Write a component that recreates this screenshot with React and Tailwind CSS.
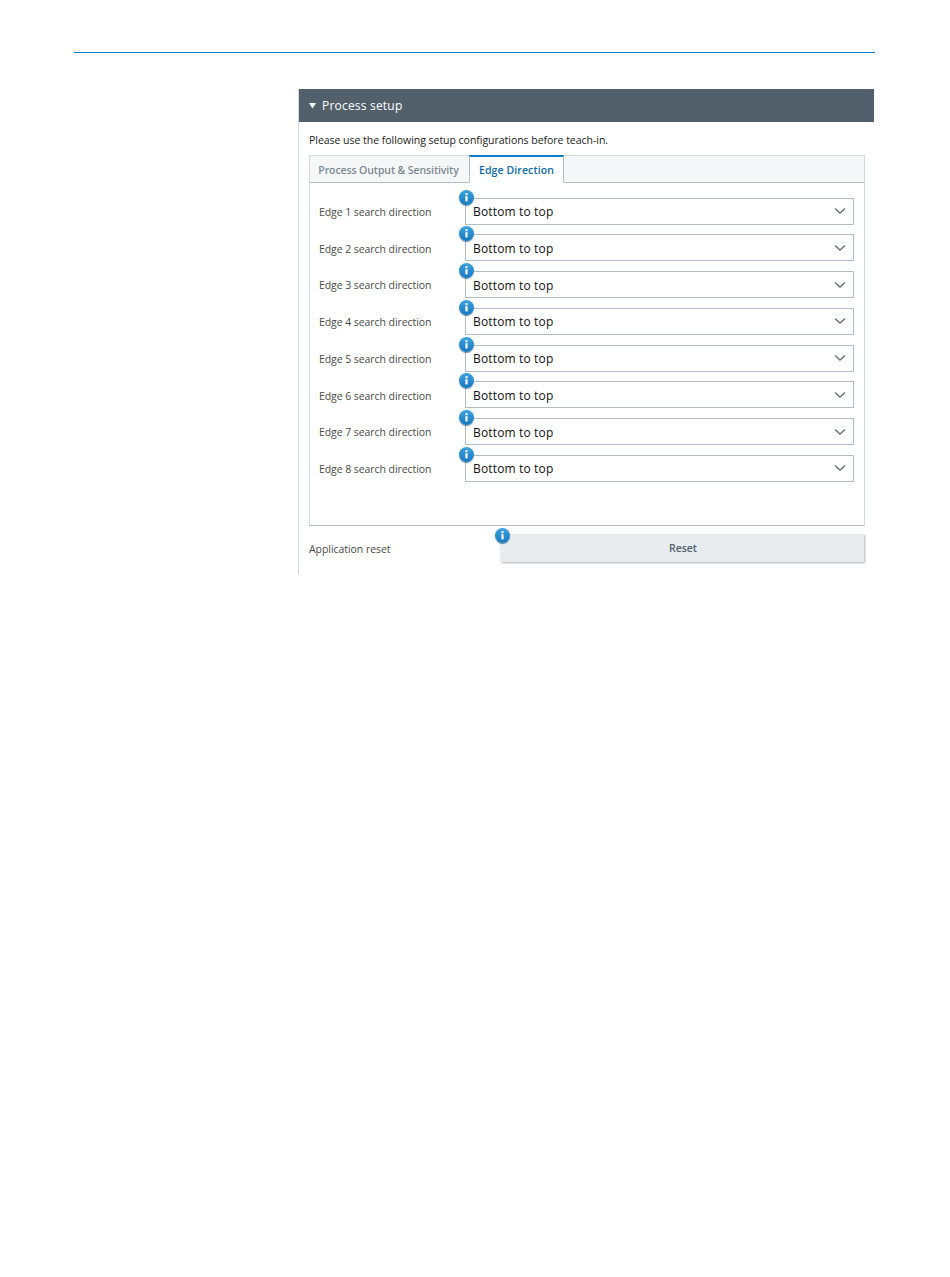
import React from "react";

const FONT = "font-['Open_Sans','Noto_Sans',sans-serif]";

const InfoBadge = ({ className }) => (
  <span className={`absolute flex h-[15px] w-[15px] items-center justify-center rounded-full bg-gradient-to-b from-[#3ba4e4] to-[#1677bc] shadow-[0_1px_1px_rgba(0,60,110,0.6)] ${className}`}>
    <svg width="15" height="15" viewBox="0 0 15 15">
      <rect x="6.4" y="3.2" width="2.2" height="2" fill="#fff" />
      <rect x="6.4" y="6.2" width="2.2" height="5.2" fill="#fff" />
    </svg>
  </span>
);

const Chevron = () => (
  <svg width="12" height="8" viewBox="0 0 12 8" fill="none">
    <path d="M1 1.5 L6 6 L11 1.5" stroke="#66747f" strokeWidth="1.5" />
  </svg>
);

const EdgeRow = ({ n }) => (
  <div className="flex h-[27px] items-center">
    <span className="w-[155px] pl-[9px] pt-[2px] text-[10.5px] leading-none tracking-[-0.07px] text-[#4a4a4a]">
      Edge {n} search direction
    </span>
    <div className="relative flex h-[27px] w-[389px] items-center justify-between border border-[#b3bdc5] pl-[7px] pr-[7px]">
      <InfoBadge className="left-[-7px] top-[-9px]" />
      <span className="pt-[2px] text-[12px] leading-none tracking-[0.15px] text-[#111]">Bottom to top</span>
      <Chevron />
    </div>
  </div>
);

export default function App() {
  const edges = [1, 2, 3, 4, 5, 6, 7, 8];

  return (
    <div className={`h-[1277px] w-[950px] bg-white pt-[52px] ${FONT}`}>
      {/* top rule */}
      <div className="ml-[74px] h-px w-[801px] bg-[#0a7fc4]" />

      <div className="ml-[298px] mt-[36px] h-[485px] w-[576px] border-l border-[#d3d8dc]">
        {/* header */}
        <div className="flex h-[33px] items-center gap-[6px] bg-[#52606c] pl-[10px] text-white">
          <svg width="7" height="7" viewBox="0 0 7 7">
            <path d="M0 1 L7 1 L3.5 6.5 Z" fill="#fff" />
          </svg>
          <span className="text-[12px] font-medium leading-none tracking-[0.2px]">Process setup</span>
        </div>

        <p className="mt-[11px] pl-[10px] text-[10.5px] leading-[14px] tracking-[-0.03px] text-[#222]">
          Please use the following setup configurations before teach-in.
        </p>

        {/* tabs panel */}
        <div className="ml-[10px] mt-[8px] h-[371px] w-[556px] border border-[#d3d8dc] border-b-[#b3bdc5]">
          <div className="flex h-[27px] border-b border-[#b3bdc5] bg-[#f5f7f9]">
            <div className="flex w-[159px] items-center justify-center pr-[2px] pt-[3px] text-[10.5px] font-semibold tracking-[-0.1px] text-[#7c8992]">
              Process Output &amp; Sensitivity
            </div>
            <div className="-mt-px flex h-[28px] w-[95px] items-center justify-center border-x border-b border-t-2 border-x-[#b3bdc5] border-b-white border-t-[#0a7fc4] bg-white pt-[2px] text-[10.5px] font-semibold tracking-[0.1px] text-[#0a6aa8]">
              Edge Direction
            </div>
          </div>

          <div className="mt-[14.6px] flex flex-col gap-[9.75px]">
            {edges.map((n) => (
              <EdgeRow key={n} n={n} />
            ))}
          </div>
        </div>

        {/* reset */}
        <div className="ml-[10px] mt-[8px] flex h-[28px] w-[556px] items-center">
          <span className="w-[191px] pt-[2px] text-[10.5px] leading-none tracking-[-0.05px] text-[#4a4a4a]">Application reset</span>
          <div className="relative flex h-[28px] w-[364px] items-center justify-center bg-[#e8ecee] pl-[2px] pt-[2px] text-[10.5px] font-semibold text-[#52606c] shadow-[1px_1px_2px_rgba(0,0,0,0.3)]">
            <InfoBadge className="left-[-5px] top-[-6px]" />
            Reset
          </div>
        </div>
      </div>
    </div>
  );
}
